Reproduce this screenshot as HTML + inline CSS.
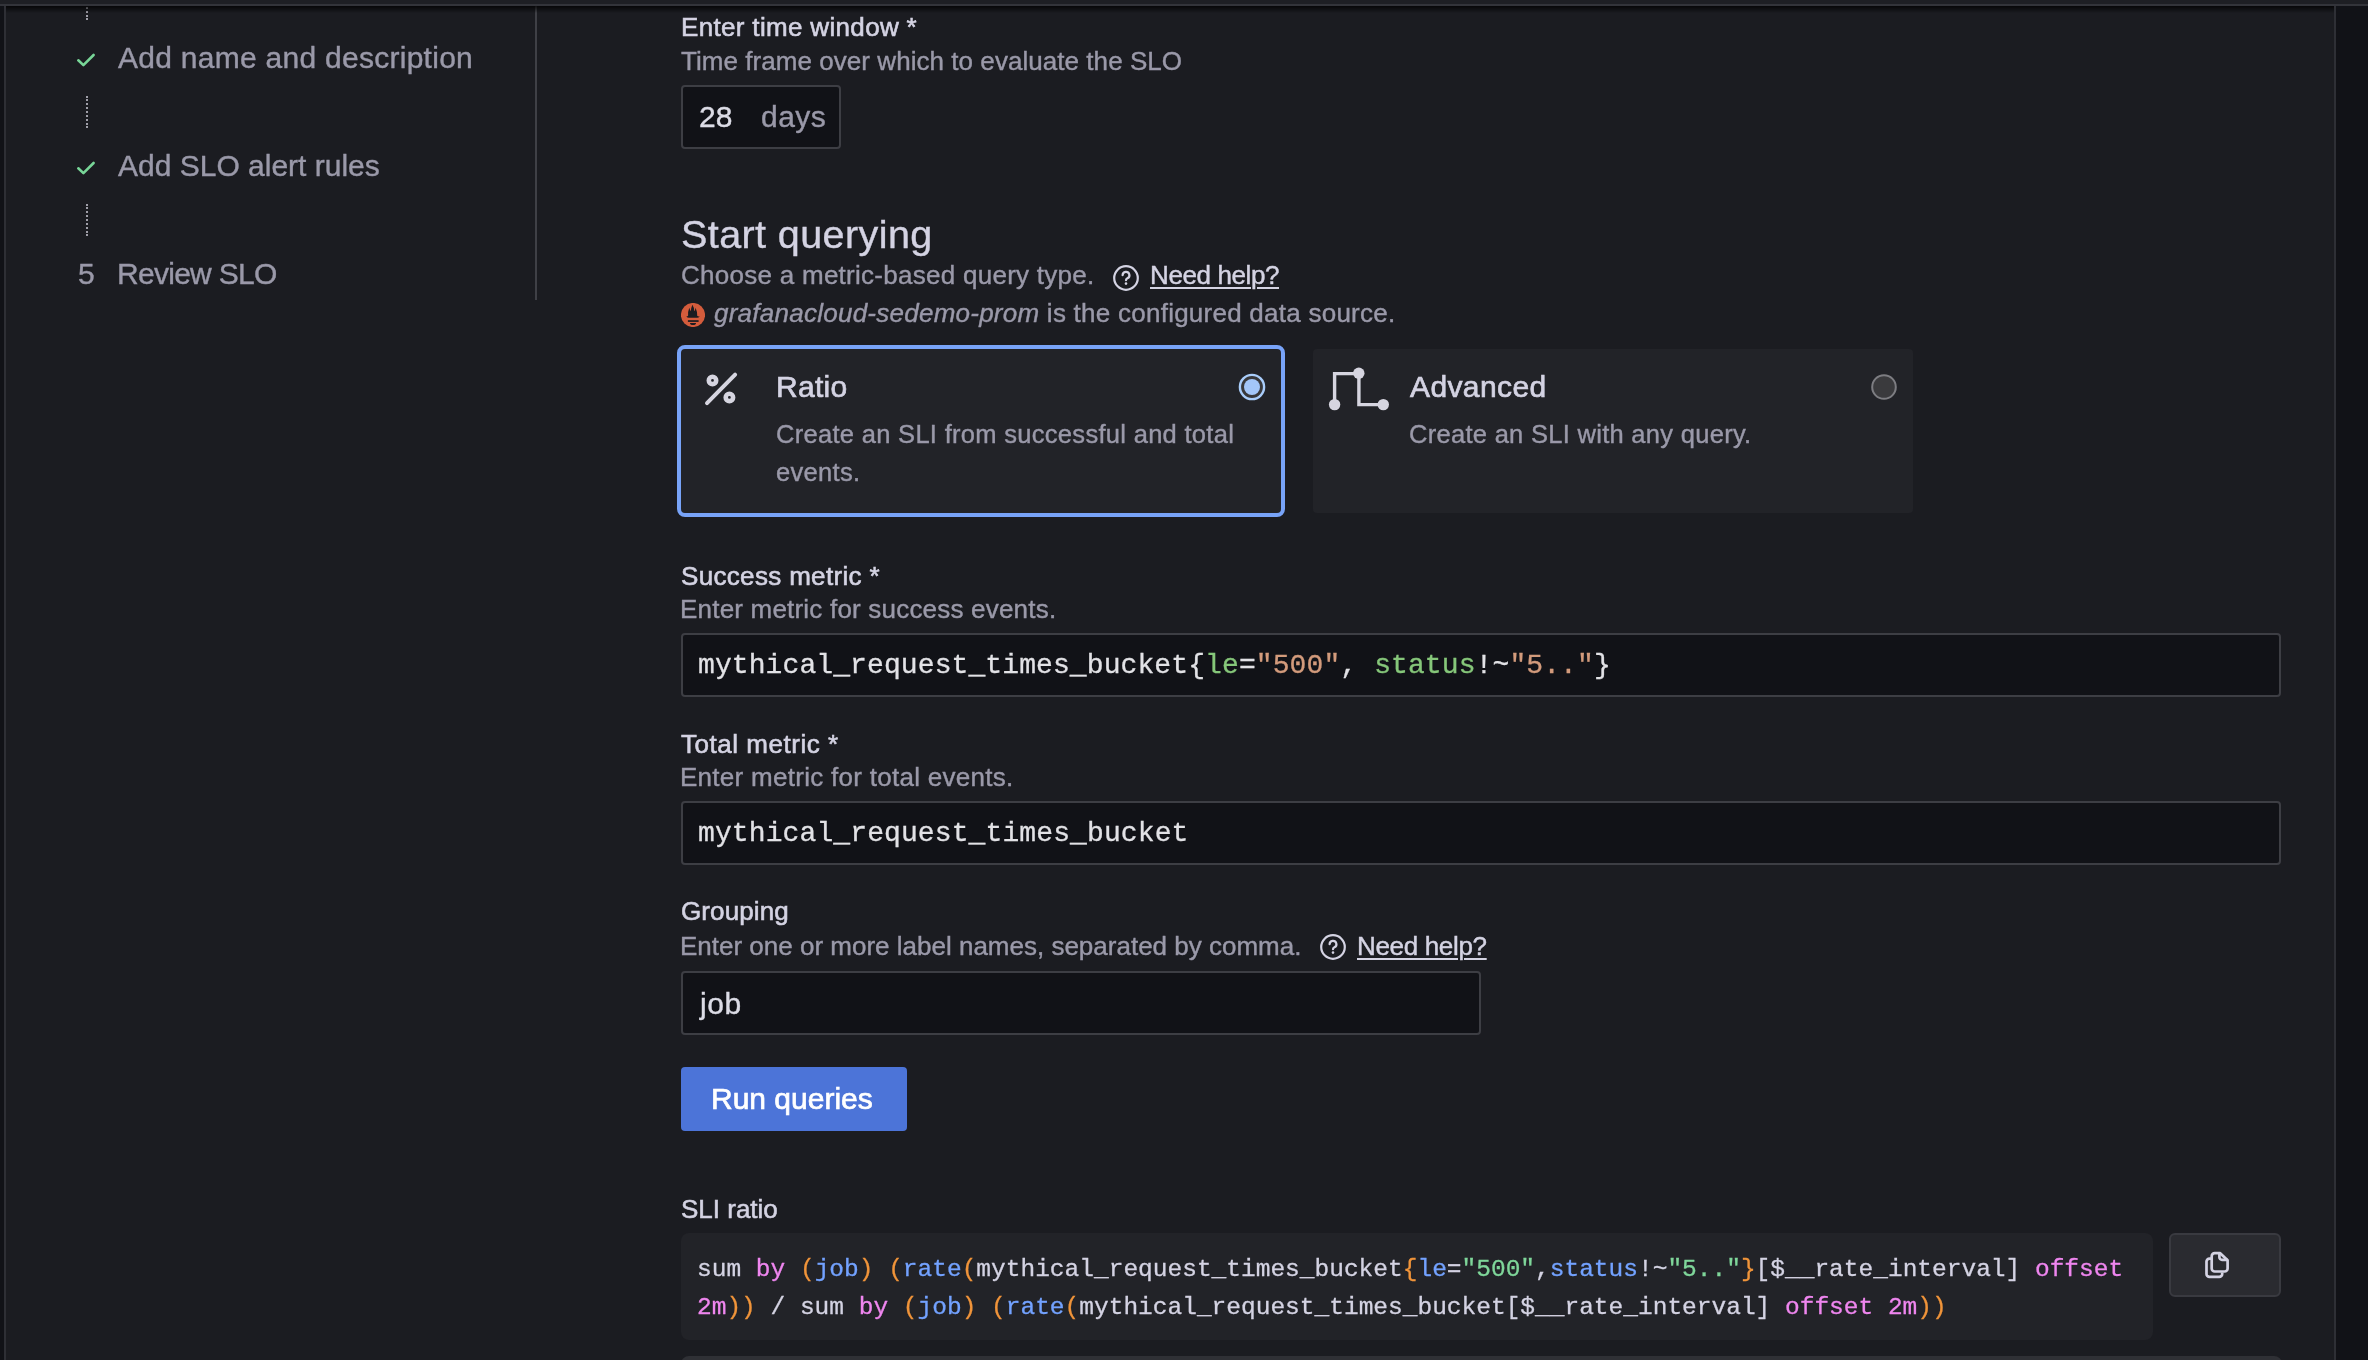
<!DOCTYPE html>
<html><head><meta charset="utf-8">
<style>
html,body{margin:0;padding:0;}
body{width:2368px;height:1360px;overflow:hidden;background:#111217;position:relative;font-family:"Liberation Sans",sans-serif;}
.a{position:absolute;white-space:pre;line-height:1;will-change:transform;}
#panel{position:absolute;left:6px;top:6px;width:2328px;height:1354px;background:#1b1c21;overflow:hidden;}
#topbar{position:absolute;left:0;top:0;width:2368px;height:4px;background:#1e1f24;}
#topborder{position:absolute;left:0;top:4px;width:2368px;height:2px;background:#33343a;}
#lborder{position:absolute;left:4px;top:6px;width:2px;height:1354px;background:#2e2f35;}
#topshadow{position:absolute;left:6px;top:6px;width:2328px;height:7px;background:linear-gradient(rgba(0,0,0,0.75),rgba(0,0,0,0));}
#rcanvas{position:absolute;left:2336px;top:6px;width:32px;height:1354px;background:#111217;}
#rborder{position:absolute;left:2334px;top:6px;width:2px;height:1354px;background:#2e2f35;}
.side{font-size:30px;color:#9a99a9;-webkit-text-stroke:0.4px #9a99a9;}
.lbl{font-size:26px;color:#d4d3e3;-webkit-text-stroke:0.6px #d4d3e3;}
.desc{font-size:26px;color:#9a99a9;-webkit-text-stroke:0.4px #9a99a9;}
.dots{position:absolute;width:0;border-left:2px dotted #9f9ea8;}
.input{position:absolute;box-sizing:border-box;background:#111217;border:2px solid #3d3e44;border-radius:4px;}
.mono{font-family:"Liberation Mono",monospace;}
.mono span{-webkit-text-stroke:0.3px currentColor;}
</style></head>
<body>
<div id="panel"></div>

<!-- sidebar -->
<div class="dots" style="left:86px;top:-12px;height:32px;"></div>
<svg style="position:absolute;left:70px;top:45px" width="32" height="30" viewBox="70 45 32 30"><polyline points="78.3,60.3 83.4,65.1 93.6,55" fill="none" stroke="#78d698" stroke-width="2.6" stroke-linecap="round" stroke-linejoin="round"/></svg>
<div class="a side" style="left:118px;top:43px;letter-spacing:0.27px">Add name and description</div>
<div class="dots" style="left:86px;top:96px;height:32px;"></div>
<svg style="position:absolute;left:70px;top:153px" width="32" height="30" viewBox="70 153 32 30"><polyline points="78.3,168.3 83.4,173.1 93.6,163" fill="none" stroke="#78d698" stroke-width="2.6" stroke-linecap="round" stroke-linejoin="round"/></svg>
<div class="a side" style="left:118px;top:151px">Add SLO alert rules</div>
<div class="dots" style="left:86px;top:204px;height:32px;"></div>
<div class="a side" style="left:77.5px;top:259px">5</div>
<div class="a side" style="left:117px;top:259px;letter-spacing:-0.72px">Review SLO</div>
<div style="position:absolute;left:535px;top:6px;width:2px;height:294px;background:#3f4046"></div>

<!-- main -->
<div class="a lbl" style="left:680.5px;top:14px;letter-spacing:0.33px">Enter time window *</div>
<div class="a desc" style="left:681px;top:48px;letter-spacing:0.05px">Time frame over which to evaluate the SLO</div>
<div class="input" style="left:681px;top:85px;width:160px;height:64px"></div>
<div class="a" style="left:699px;top:102px;font-size:30px;color:#dcdce6;-webkit-text-stroke:0.4px #dcdce6">28</div>
<div class="a" style="left:760.5px;top:102px;font-size:30px;color:#9a99a9;-webkit-text-stroke:0.4px #9a99a9;letter-spacing:0.47px">days</div>

<div class="a" style="left:680.5px;top:215px;font-size:39.5px;color:#d4d3e3;letter-spacing:0.41px;-webkit-text-stroke:0.4px #d4d3e3">Start querying</div>
<div class="a desc" style="left:680.5px;top:262px;letter-spacing:0.27px">Choose a metric-based query type.</div>
<svg style="position:absolute;left:1112px;top:264px" width="28" height="28" viewBox="0 0 28 28"><circle cx="14" cy="14" r="11.8" fill="none" stroke="#d4d3e3" stroke-width="2.2"/><path d="M10.6 11.2 a3.4 3.4 0 1 1 4.8 3.1 c-0.9 0.4 -1.4 0.9 -1.4 1.9" fill="none" stroke="#d4d3e3" stroke-width="2.2" stroke-linecap="round"/><circle cx="14" cy="19.6" r="1.3" fill="#d4d3e3"/></svg>
<div class="a" style="left:1150px;top:262px;letter-spacing:-0.4px;font-size:26px;color:#d4d3e3;-webkit-text-stroke:0.45px #d4d3e3;text-decoration:underline;text-underline-offset:3px;text-decoration-thickness:2px">Need help?</div>
<svg style="position:absolute;left:681px;top:302.9px" width="24" height="24" viewBox="0 0 24 24"><circle cx="12" cy="12" r="12.05" fill="#d45c3c"/><path d="M5.2 13.4Q6.5 14.8 7.8 14.8H16.2Q17.5 14.8 18.8 13.4Q17.2 13.8 16.2 12.8Q16.6 9.5 14.6 4.8Q14.2 7.5 13.2 8.2Q13.2 4.5 11.4 1.8Q10 5 9.8 8.2Q8.8 7 8.3 4.8Q6.6 9 7.1 12.8Q6.3 13.8 5.2 13.4Z" fill="#1b1c21"/><rect x="6.9" y="17.2" width="10.7" height="1.7" fill="#1b1c21"/><path d="M9 20H15A3 2 0 0 1 9 20Z" fill="#1b1c21"/></svg>
<div class="a desc" style="left:714px;top:300px;letter-spacing:0.25px"><i>grafanacloud-sedemo-prom</i> is the configured data source.</div>

<!-- cards -->
<div style="position:absolute;left:677px;top:345px;width:600px;height:164px;border:4px solid #78a3f8;border-radius:8px;background:#222328"></div>
<svg style="position:absolute;left:700px;top:368px" width="44" height="42" viewBox="700 368 44 42"><line x1="707" y1="403.2" x2="735.1" y2="374.7" stroke="#d6d5e0" stroke-width="4" stroke-linecap="round"/><circle cx="712.5" cy="380.4" r="3.7" fill="none" stroke="#d6d5e0" stroke-width="4.6"/><circle cx="729.4" cy="397.4" r="3.7" fill="none" stroke="#d6d5e0" stroke-width="4.6"/></svg>
<div class="a" style="left:775.5px;top:372px;font-size:30px;color:#d4d3e3;-webkit-text-stroke:0.7px #d4d3e3;letter-spacing:0.27px">Ratio</div>
<div class="a" style="left:776.4px;top:422px;font-size:25.5px;color:#9a99a9;-webkit-text-stroke:0.4px #9a99a9;letter-spacing:0.3px">Create an SLI from successful and total</div>
<div class="a" style="left:776.4px;top:460px;font-size:25.5px;color:#9a99a9;-webkit-text-stroke:0.4px #9a99a9;letter-spacing:0.3px">events.</div>
<svg style="position:absolute;left:1236px;top:371px" width="32" height="32" viewBox="0 0 32 32"><circle cx="16" cy="16" r="12.1" fill="#38383b" stroke="#a9cdfb" stroke-width="2.4"/><circle cx="16" cy="16" r="8" fill="#a3c6f9"/></svg>

<div style="position:absolute;left:1313px;top:349px;width:600px;height:164px;border-radius:4px;background:#222328"></div>
<svg style="position:absolute;left:1320px;top:360px" width="80" height="60" viewBox="1320 360 80 60"><path d="M1334.6 404.6V373.6H1358.9V404.6H1383.3" fill="none" stroke="#d6d5e0" stroke-width="3.4"/><circle cx="1334.6" cy="404.6" r="5.7" fill="#d6d5e0"/><circle cx="1358.8" cy="373.2" r="5.7" fill="#d6d5e0"/><circle cx="1383.3" cy="404.6" r="5.7" fill="#d6d5e0"/></svg>
<div class="a" style="left:1410px;top:372px;font-size:30px;color:#d4d3e3;-webkit-text-stroke:0.7px #d4d3e3;letter-spacing:0.39px">Advanced</div>
<div class="a" style="left:1408.6px;top:422px;font-size:25.5px;color:#9a99a9;-webkit-text-stroke:0.4px #9a99a9;letter-spacing:0.29px">Create an SLI with any query.</div>
<svg style="position:absolute;left:1868px;top:371px" width="32" height="32" viewBox="0 0 32 32"><circle cx="16" cy="16" r="11.8" fill="#3a3a3d" stroke="#7d7d82" stroke-width="2"/></svg>

<!-- success metric -->
<div class="a lbl" style="left:680.5px;top:563px;letter-spacing:0.33px">Success metric *</div>
<div class="a desc" style="left:680px;top:596px;letter-spacing:0.2px">Enter metric for success events.</div>
<div class="input" style="left:681px;top:633px;width:1600px;height:64px"></div>
<div class="a mono" style="left:698px;top:652px;letter-spacing:0.1px;font-size:28px;color:#e2e2e6;-webkit-text-stroke:0.3px currentColor">mythical_request_times_bucket{<span style="color:#86c77a">le</span>=<span style="color:#d39b7c">"500"</span>, <span style="color:#86c77a">status</span>!~<span style="color:#d39b7c">"5.."</span>}</div>

<div class="a lbl" style="left:681px;top:731px;letter-spacing:0.53px">Total metric *</div>
<div class="a desc" style="left:680px;top:764px;letter-spacing:0.28px">Enter metric for total events.</div>
<div class="input" style="left:681px;top:801px;width:1600px;height:64px"></div>
<div class="a mono" style="left:698px;top:820px;letter-spacing:0.11px;font-size:28px;color:#e2e2e6;-webkit-text-stroke:0.3px currentColor">mythical_request_times_bucket</div>

<div class="a lbl" style="left:680.5px;top:898px;letter-spacing:0.1px">Grouping</div>
<div class="a desc" style="left:680px;top:933px">Enter one or more label names, separated by comma.</div>
<svg style="position:absolute;left:1319px;top:933px" width="28" height="28" viewBox="0 0 28 28"><circle cx="14" cy="14" r="11.8" fill="none" stroke="#d4d3e3" stroke-width="2.2"/><path d="M10.6 11.2 a3.4 3.4 0 1 1 4.8 3.1 c-0.9 0.4 -1.4 0.9 -1.4 1.9" fill="none" stroke="#d4d3e3" stroke-width="2.2" stroke-linecap="round"/><circle cx="14" cy="19.6" r="1.3" fill="#d4d3e3"/></svg>
<div class="a" style="left:1356.6px;top:933px;letter-spacing:-0.33px;font-size:26px;color:#d4d3e3;-webkit-text-stroke:0.45px #d4d3e3;text-decoration:underline;text-underline-offset:3px;text-decoration-thickness:2px">Need help?</div>
<div class="input" style="left:681px;top:971px;width:800px;height:64px"></div>
<div class="a" style="left:699.7px;top:989px;font-size:30px;color:#dcdce6;-webkit-text-stroke:0.4px #dcdce6;letter-spacing:0.6px">job</div>

<div style="position:absolute;left:681px;top:1067px;width:226px;height:64px;background:#4c74d8;border-radius:4px"></div>
<div class="a" style="left:711.4px;top:1084px;font-size:30px;color:#ffffff;-webkit-text-stroke:0.7px #ffffff">Run queries</div>

<div class="a desc" style="left:680.5px;top:1196px;color:#d4d3e3;-webkit-text-stroke:0.55px #d4d3e3">SLI ratio</div>
<div style="position:absolute;left:681px;top:1233px;width:1472px;height:107px;background:#222328;border-radius:8px"></div>
<div class="a mono" style="left:697.3px;top:1257.5px;font-size:24.5px;color:#d4d3e3;line-height:37.6px;margin-top:-6.5px;-webkit-text-stroke:0.3px currentColor">sum <span style="color:#ef86ef">by</span> <span style="color:#f0943a">(</span><span style="color:#73a2ff">job</span><span style="color:#f0943a">)</span> <span style="color:#f0943a">(</span><span style="color:#73a2ff">rate</span><span style="color:#f0943a">(</span>mythical_request_times_bucket<span style="color:#f0943a">{</span><span style="color:#73a2ff">le</span>=<span style="color:#7fd69a">"500"</span>,<span style="color:#73a2ff">status</span>!~<span style="color:#7fd69a">"5.."</span><span style="color:#f0943a">}</span>[$__rate_interval] <span style="color:#ef86ef">offset</span>
<span style="color:#ef86ef">2m</span><span style="color:#f0943a">))</span> / sum <span style="color:#ef86ef">by</span> <span style="color:#f0943a">(</span><span style="color:#73a2ff">job</span><span style="color:#f0943a">)</span> <span style="color:#f0943a">(</span><span style="color:#73a2ff">rate</span><span style="color:#f0943a">(</span>mythical_request_times_bucket[$__rate_interval] <span style="color:#ef86ef">offset</span> <span style="color:#ef86ef">2m</span><span style="color:#f0943a">))</span></div>
<div style="position:absolute;box-sizing:border-box;left:2169px;top:1233px;width:112px;height:64px;background:#2a2b30;border:2px solid #393a40;border-radius:6px"></div>
<svg style="position:absolute;left:2196px;top:1244px" width="44" height="44" viewBox="2196 1244 44 44"><path d="M2211.7 1256.2a3 3 0 0 1 3-3h5.5l7.4 7.1v8.2a3 3 0 0 1-3 3h-9.9a3 3 0 0 1-3-3z" fill="none" stroke="#d4d3e3" stroke-width="2.7" stroke-linejoin="round"/><path d="M2219.4 1253.2v4a2.6 2.6 0 0 0 2.6 2.6h5.6" fill="none" stroke="#d4d3e3" stroke-width="2.7"/><path d="M2211.7 1258.6h-2.2a3 3 0 0 0-3 3v12.3a3 3 0 0 0 3 3h9.7a3 3 0 0 0 3-3v-1.4" fill="none" stroke="#d4d3e3" stroke-width="2.7"/></svg>
<div style="position:absolute;box-sizing:border-box;left:681px;top:1356px;width:1601px;height:40px;background:#2f3035;border-radius:8px"></div>
<div id="topbar"></div>
<div id="topborder"></div>
<div id="topshadow"></div>
<div id="lborder"></div>
<div id="rborder"></div>
<div id="rcanvas"></div>
</body></html>
